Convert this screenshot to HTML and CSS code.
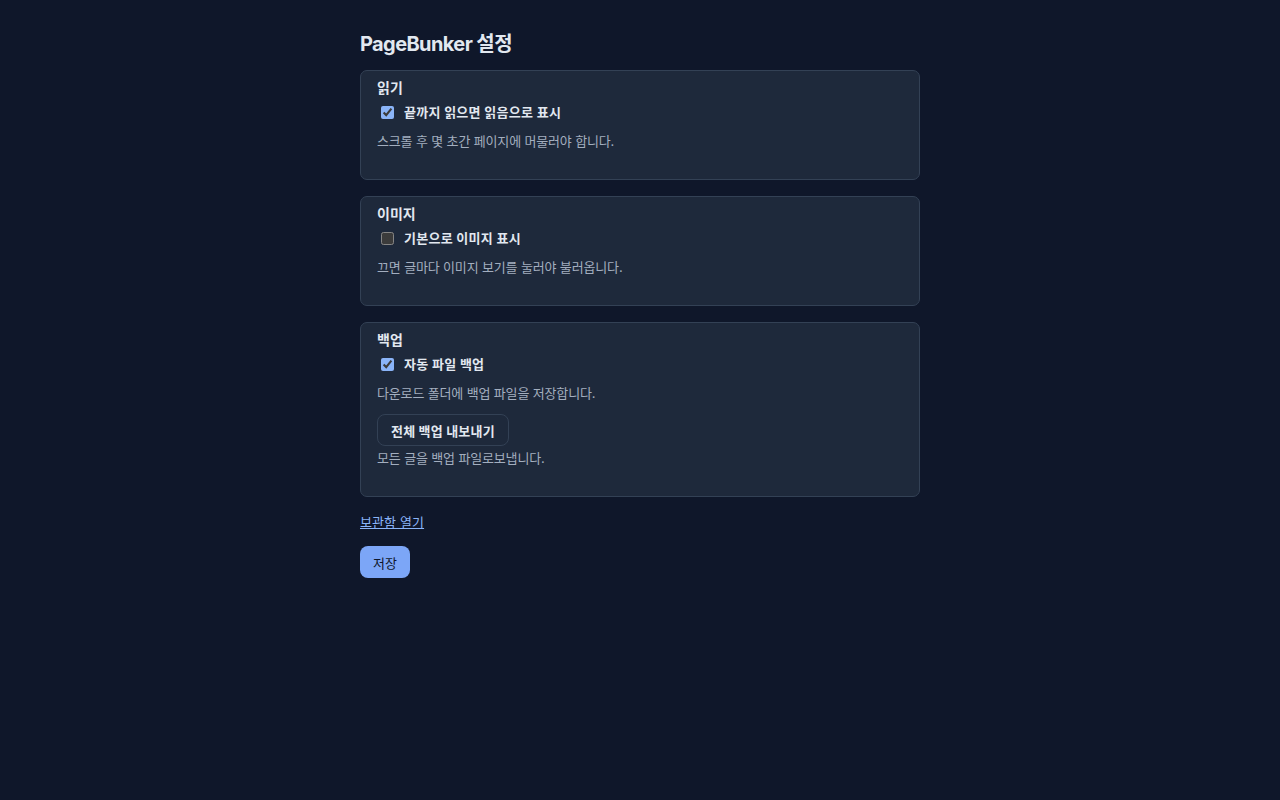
FILE: index.html
```html
<!DOCTYPE html>
<html lang="ko">
<head>
<meta charset="utf-8">
<title>PageBunker 설정</title>
<link rel="stylesheet" href="styles.css">
</head>
<body>
<main class="page">
  <h1 class="title">PageBunker 설정</h1>

  <section class="card">
    <h2 class="card-title">읽기</h2>
    <label class="check"><input type="checkbox" checked><span>끝까지 읽으면 읽음으로 표시</span></label>
    <p class="desc">스크롤 후 몇 초간 페이지에 머물러야 합니다.</p>
  </section>

  <section class="card">
    <h2 class="card-title">이미지</h2>
    <label class="check"><input type="checkbox"><span>기본으로 이미지 표시</span></label>
    <p class="desc">끄면 글마다 이미지 보기를 눌러야 불러옵니다.</p>
  </section>

  <section class="card">
    <h2 class="card-title">백업</h2>
    <label class="check"><input type="checkbox" checked><span>자동 파일 백업</span></label>
    <p class="desc desc-gap">다운로드 폴더에 백업 파일을 저장합니다.</p>
    <button class="btn-secondary" type="button">전체 백업 내보내기</button>
    <p class="desc desc-tight">모든 글을 백업 파일로보냅니다.</p>
  </section>

  <a class="link" href="#">보관함 열기</a>
  <div class="actions"><button class="btn-primary" type="button">저장</button></div>
</main>
</body>
</html>
```

FILE: styles.css
```css
html { color-scheme: dark; }
body {
  margin: 0;
  background: #0f172a;
  color: #e2e8f0;
  font-family: Inter, "Noto Sans CJK KR", "Noto Sans", sans-serif;
  font-size: 13px;
}
.page {
  width: 560px;
  margin: 0 auto;
  padding: 30px 0 40px;
  display: flex;
  flex-direction: column;
  align-items: stretch;
}
.title {
  margin: 0 0 12px;
  font-size: 20px;
  line-height: 28px;
  font-weight: 700;
  letter-spacing: -0.6px;
}
.card {
  background: #1e293b;
  border: 1px solid #334155;
  border-radius: 7px;
  padding: 8px 16px 16px;
  margin-bottom: 16px;
}
.card-title {
  margin: 0 0 6px;
  font-size: 14px;
  line-height: 18px;
  font-weight: 700;
}
.check {
  display: flex;
  align-items: center;
  font-size: 13px;
  font-weight: 600;
  line-height: 19px;
  letter-spacing: 0.25px;
}
.check input {
  accent-color: #8ab4f8;
  width: 13px;
  height: 13px;
  margin: 3px 10px 3px 4px;
}
.desc {
  margin: 10px 0 13px;
  color: #a3aebf;
  font-size: 13px;
  line-height: 18px;
  letter-spacing: -0.15px;
}
.desc-gap { margin-bottom: 12px; }
.desc-tight { margin-top: 3px; }
.btn-secondary {
  align-self: flex-start;
  height: 32px;
  padding: 0 13px;
  background: #1e293b;
  color: #e2e8f0;
  border: 1px solid #334155;
  border-radius: 8px;
  font: inherit;
  font-size: 13px;
  font-weight: 700;
  letter-spacing: 0.2px;
  cursor: pointer;
}
.link {
  color: #8ab4f8;
  text-decoration: underline;
  font-size: 13px;
  line-height: 18px;
  align-self: flex-start;
  letter-spacing: 0.1px;
}
.actions { margin-top: 15px; }
.btn-primary {
  height: 32px;
  padding: 0 13px;
  background: #7ca6f7;
  color: #0f172a;
  border: none;
  border-radius: 8px;
  font: inherit;
  font-size: 13px;
  cursor: pointer;
}
```
